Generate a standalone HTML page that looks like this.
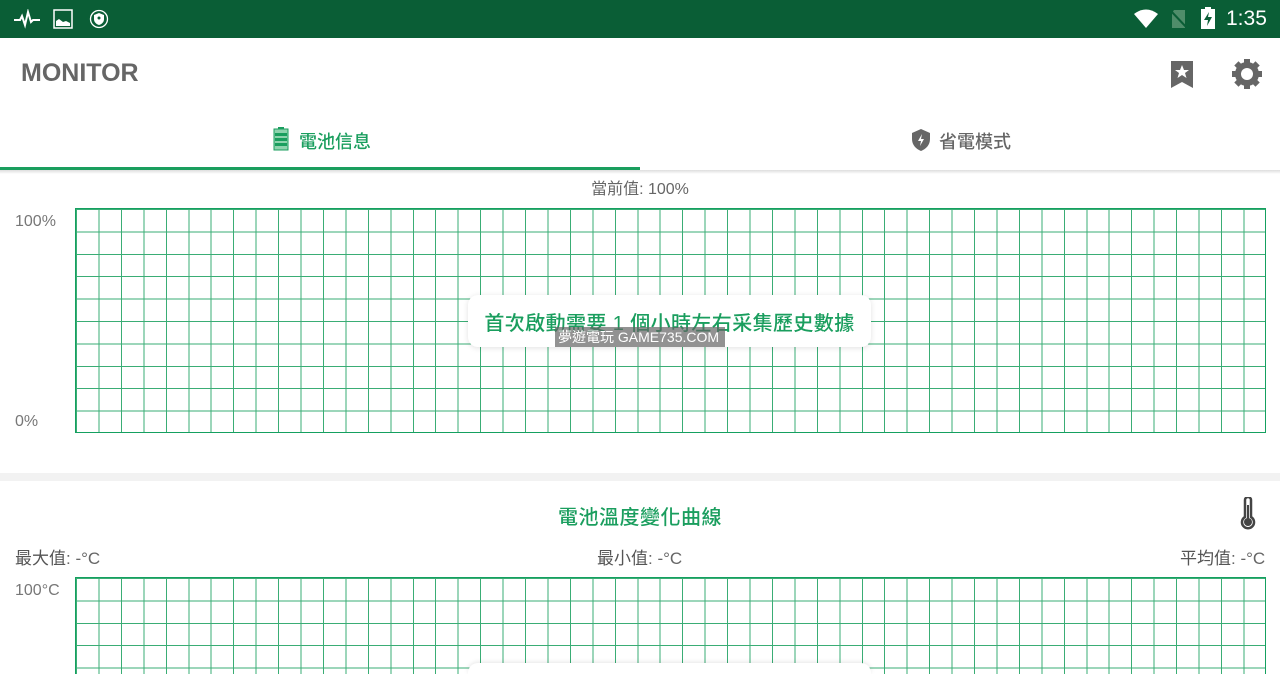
<!DOCTYPE html>
<html><head><meta charset="utf-8"><style>
*{margin:0;padding:0;box-sizing:border-box}
html,body{width:1280px;height:674px;overflow:hidden}
body{background:#fff;font-family:"Liberation Sans","Noto Sans CJK TC",sans-serif;position:relative}
.abs{position:absolute}
.sb{left:0;top:0;width:1280px;height:38px;background:#0a5e36}
.grid{border:1px solid #15a060;background-color:#fff;
background-image:repeating-linear-gradient(90deg,#3aad75 0 1px,transparent 1px 22.45px),repeating-linear-gradient(180deg,#3aad75 0 1px,transparent 1px 22.4px);}
.lbl{color:#777;font-size:16px}
.cjk{font-family:"Liberation Sans","Noto Sans CJK TC",sans-serif}
</style></head><body>
<div class="abs sb"></div>
<svg class="abs" style="left:13px;top:9px" width="28" height="20" viewBox="0 0 28 20"><path d="M1 11h6l2-4 3 9 3-13 3 10 2-2h7" fill="none" stroke="#fff" stroke-width="2"/></svg>
<svg class="abs" style="left:53px;top:9px" width="20" height="20" viewBox="0 0 20 20"><rect x="1" y="1" width="18" height="18" fill="none" stroke="#fff" stroke-width="1.5"/><path d="M3 17v-5l3-2 4 3 3-1 4 2v3z" fill="#fff"/></svg>
<svg class="abs" style="left:89px;top:9px" width="20" height="20" viewBox="0 0 20 20"><circle cx="10" cy="10" r="8.5" fill="none" stroke="#fff" stroke-width="1.3"/><path d="M10 4l5 2v4c0 3-2 5-5 6-3-1-5-3-5-6V6z" fill="#fff"/><circle cx="10" cy="9" r="1.5" fill="#0a5e36"/></svg>
<svg class="abs" style="left:1133px;top:8px" width="26" height="22" viewBox="0 0 26 22"><path d="M1 6Q13-3 25 6L13 20z" fill="#fff"/></svg>
<svg class="abs" style="left:1168px;top:8px" width="22" height="22" viewBox="0 0 22 22"><path d="M6 2h11v18H4V5z" fill="#4f8d6a"/><path d="M2 2l18 19" stroke="#0a5e36" stroke-width="2"/></svg>
<svg class="abs" style="left:1199px;top:6px" width="18" height="24" viewBox="0 0 18 24"><rect x="6" y="1" width="6" height="3" fill="#fff"/><rect x="2" y="3" width="14" height="20" fill="#fff"/><path d="M10 6l-5 8h4l-1 6 5-9H9z" fill="#0a5e36"/></svg>
<div class="abs" style="left:1226px;top:7px;color:#fff;font-size:21px">1:35</div>
<div class="abs" style="left:21px;top:59px;font-size:25px;font-weight:bold;color:#666">MONITOR</div>
<svg class="abs" style="left:1170px;top:60px" width="24" height="28" viewBox="0 0 24 28"><path d="M1 1h22v27l-11-6-11 6z" fill="#666"/><path d="M12 5l2 5h5l-4 3 1.5 5-4.5-3-4.5 3 1.5-5-4-3h5z" fill="#fff"/></svg>
<svg class="abs" style="left:1231px;top:58px" width="32" height="32" viewBox="0 0 32 32"><g fill="#666"><circle cx="16" cy="16" r="12"/><rect x="13" y="1" width="6" height="30"/><rect x="13" y="1" width="6" height="30" transform="rotate(45 16 16)"/><rect x="13" y="1" width="6" height="30" transform="rotate(90 16 16)"/><rect x="13" y="1" width="6" height="30" transform="rotate(135 16 16)"/></g><circle cx="16" cy="16" r="6" fill="#fff"/></svg>
<svg class="abs" style="left:273px;top:127px" width="16" height="24" viewBox="0 0 16 24"><rect x="5" y="0" width="6" height="2" fill="#1a9e5e"/><rect x="1" y="2" width="14" height="21" fill="#8fd3ae" stroke="#1a9e5e"/><g fill="#1a9e5e"><rect x="2" y="6" width="12" height="3"/><rect x="2" y="11" width="12" height="3"/><rect x="2" y="16" width="12" height="3"/></g></svg>
<div class="abs cjk" style="left:299px;top:128px;font-size:18px;color:#1a9e5e;font-weight:500">電池信息</div>
<svg class="abs" style="left:911px;top:128px" width="20" height="24" viewBox="0 0 20 24"><path d="M10 1l9 4v6c0 6-4 10-9 12C5 21 1 17 1 11V5z" fill="#666"/><path d="M11 6l-4 7h3l-1 5 4-7h-3z" fill="#fff"/></svg>
<div class="abs cjk" style="left:939px;top:128px;font-size:18px;color:#666;font-weight:500">省電模式</div>
<div class="abs" style="left:0;top:167px;width:640px;height:3px;background:#1a9e5e"></div>
<div class="abs" style="left:0;top:170px;width:1280px;height:4px;background:linear-gradient(#ddd,#fff)"></div>
<div class="abs cjk" style="left:0;width:1280px;text-align:center;top:175px;font-size:16px;color:#666">當前值: 100%</div>
<div class="abs lbl" style="left:15px;top:213px">100%</div>
<div class="abs lbl" style="left:15px;top:413px">0%</div>
<div class="abs grid" style="left:75px;top:208px;width:1191px;height:225px"></div>
<div class="abs" style="left:468px;top:295px;width:403px;height:52px;background:#fff;border-radius:10px;box-shadow:0 1px 6px rgba(0,0,0,.12)"></div>
<div class="abs cjk" style="left:468px;top:307px;width:403px;text-align:center;font-size:20px;color:#1a9e5e;font-weight:500;letter-spacing:0.4px">首次啟動需要 1 個小時左右采集歷史數據</div>
<div class="abs cjk" style="left:555px;top:327px;width:170px;height:20px;background:rgba(100,100,100,.7);color:#fff;font-size:14px;line-height:20px;padding-left:3px">夢遊電玩 GAME735.COM</div>
<div class="abs" style="left:0;top:473px;width:1280px;height:8px;background:#f2f2f2"></div>
<div class="abs cjk" style="left:0;width:1280px;text-align:center;top:501px;font-size:20px;color:#1a9e5e;font-weight:500;letter-spacing:0.5px">電池溫度變化曲線</div>
<svg class="abs" style="left:1238px;top:497px" width="20" height="34" viewBox="0 0 20 34"><path d="M7 3a3 3 0 016 0v17a6 6 0 11-6 0z" fill="none" stroke="#444" stroke-width="2.5"/><circle cx="10" cy="25" r="4" fill="#444"/><rect x="9" y="8" width="2" height="16" fill="#444"/></svg>
<div class="abs lbl cjk" style="left:15px;top:544px;color:#666;font-size:17px"><span style="color:#555">最大值</span>: -°C</div>
<div class="abs lbl cjk" style="left:597px;top:544px;color:#666;font-size:17px"><span style="color:#555">最小值</span>: -°C</div>
<div class="abs lbl cjk" style="left:1180px;top:544px;color:#666;font-size:17px"><span style="color:#555">平均值</span>: -°C</div>
<div class="abs lbl" style="left:15px;top:582px">100°C</div>
<div class="abs grid" style="left:75px;top:577px;width:1191px;height:97px;border-bottom:none"></div>
<div class="abs" style="left:468px;top:663px;width:403px;height:11px;background:#fff;border-radius:10px 10px 0 0;box-shadow:0 -1px 5px rgba(0,0,0,.1)"></div>
</body></html>
